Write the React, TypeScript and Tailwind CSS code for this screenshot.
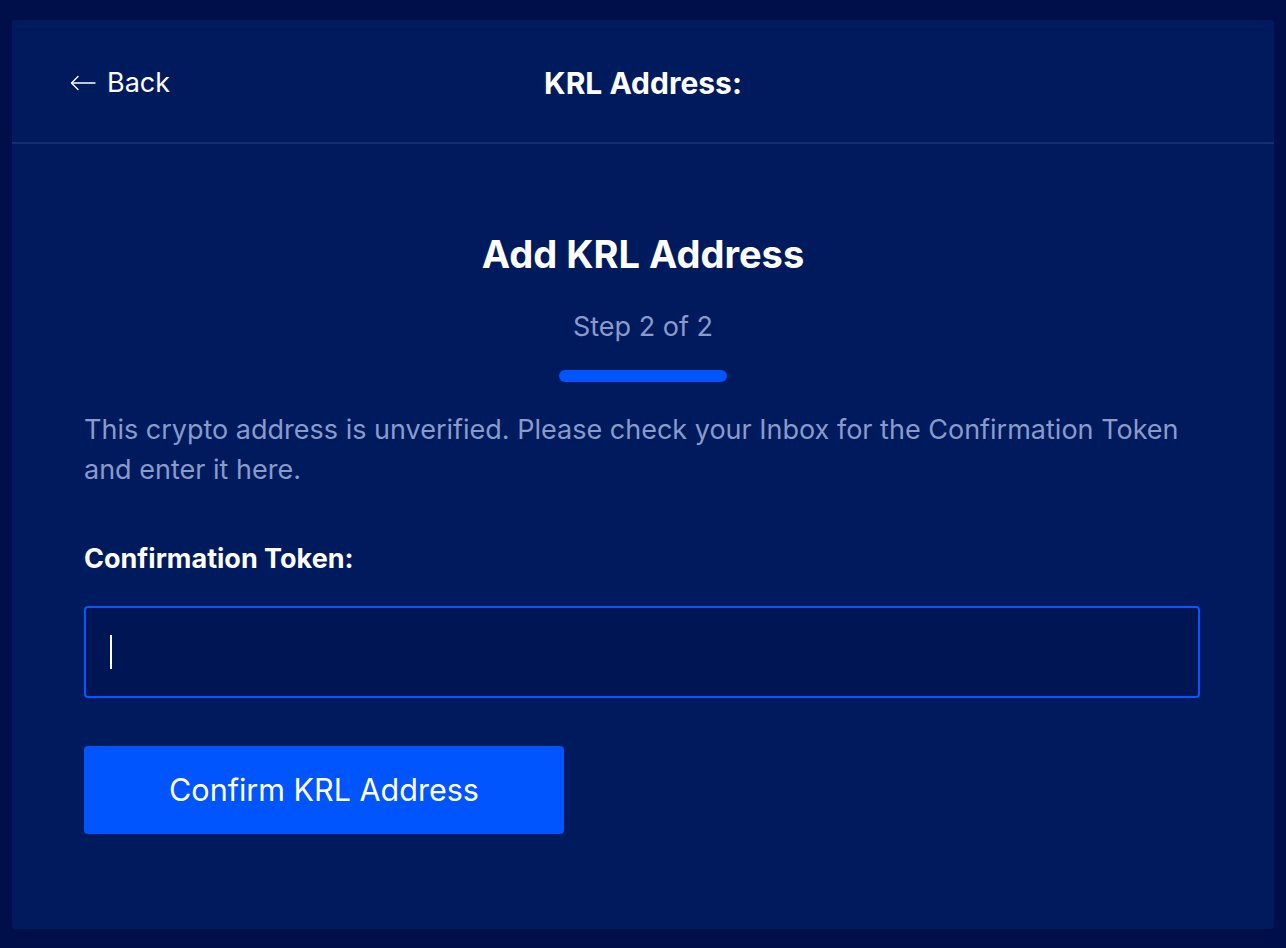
import React from "react";

export default function App() {
  return (
    <div className="w-[1286px] h-[948px] bg-[#000f4a] p-[12px] pt-[20px] pb-[19px]" style={{ fontFamily: "Inter, 'Noto Sans', sans-serif" }}>
      <div className="h-full w-full bg-[#001a5e] rounded-[4px] flex flex-col">
        <div className="relative h-[124px] flex items-center border-b-2 border-[#15306f] shrink-0 pt-[3px]">
          <div className="flex items-center gap-[11px] pl-[58px] text-white">
            <svg width="26" height="16" viewBox="0 0 26 16" fill="none" stroke="white" strokeWidth="1.4" strokeLinecap="round" strokeLinejoin="round">
              <path d="M25 8H2" />
              <path d="M8 1.5L1.5 8L8 14.5" />
            </svg>
            <span className="text-[27px] leading-none">Back</span>
          </div>
          <div className="absolute inset-0 pt-[3px] flex items-center justify-center pointer-events-none">
            <span className="text-white font-bold text-[30px] leading-none">KRL Address:</span>
          </div>
        </div>
        <div className="flex flex-col px-[72px]">
          <div className="flex flex-col items-center">
            <h1 className="text-white font-bold text-[38px] leading-none mt-[91px]">Add KRL Address</h1>
            <div className="text-[#8a9acb] text-[27px] leading-none mt-[40px]">Step 2 of 2</div>
            <div className="w-[168px] h-[12px] rounded-full bg-[#0055ff] mt-[30px]" />
          </div>
          <p className="text-[#8a9acb] text-[27px] leading-[40px] mt-[28px]">
            This crypto address is unverified. Please check your Inbox for the Confirmation Token and enter it here.
          </p>
          <div className="text-white font-bold text-[27px] leading-none mt-[55px]">Confirmation Token:</div>
          <div className="mt-[34px] w-[1116px] h-[92px] border-2 border-[#0a55ff] rounded-[4px] bg-[#001554] flex items-center pl-[24px]">
            <div className="w-[2px] h-[34px] bg-white" />
          </div>
          <button className="mt-[48px] w-[480px] h-[88px] bg-[#0055ff] rounded-[4px] text-white text-[30.5px] leading-none">
            Confirm KRL Address
          </button>
        </div>
      </div>
    </div>
  );
}
